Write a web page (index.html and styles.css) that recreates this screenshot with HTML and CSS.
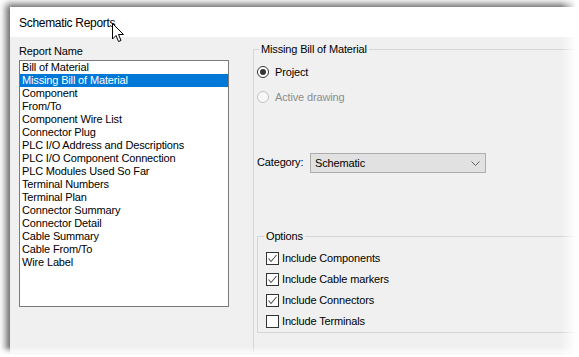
FILE: index.html
```html
<!DOCTYPE html>
<html lang="en">
<head>
    <meta charset="UTF-8">
    <title>Schematic Reports</title>
    <link rel="stylesheet" href="styles.css">
</head>
<body>
    <div class="screen">
        <div class="dialog">
            <!-- title bar -->
            <div class="title-bar">Schematic Reports</div>

            <div class="dialog-body">
                <!-- left: report list -->
                <div class="report-column">
                    <div class="list-label">Report Name</div>
                    <ul class="report-list">
                        <li>Bill of Material</li>
                        <li class="selected">Missing Bill of Material</li>
                        <li>Component</li>
                        <li>From/To</li>
                        <li>Component Wire List</li>
                        <li>Connector Plug</li>
                        <li>PLC I/O Address and Descriptions</li>
                        <li>PLC I/O Component Connection</li>
                        <li>PLC Modules Used So Far</li>
                        <li>Terminal Numbers</li>
                        <li>Terminal Plan</li>
                        <li>Connector Summary</li>
                        <li>Connector Detail</li>
                        <li>Cable Summary</li>
                        <li>Cable From/To</li>
                        <li>Wire Label</li>
                    </ul>
                </div>

                <!-- right: report settings -->
                <fieldset class="group report-group">
                    <legend>Missing Bill of Material</legend>

                    <div class="radio-row">
                        <span class="radio checked"></span>
                        <span>Project</span>
                    </div>
                    <div class="radio-row disabled">
                        <span class="radio"></span>
                        <span>Active drawing</span>
                    </div>

                    <div class="category-row">
                        <span class="category-label">Category:</span>
                        <div class="combo">
                            <span>Schematic</span>
                            <svg class="chevron" width="9" height="5" viewBox="0 0 9 5">
                                <path d="M0.5 0.5 L4.5 4.5 L8.5 0.5" fill="none" stroke="#606060" stroke-width="1"/>
                            </svg>
                        </div>
                    </div>

                    <fieldset class="group options-group">
                        <legend>Options</legend>
                        <div class="check-row">
                            <span class="checkbox"><svg width="11" height="11" viewBox="0 0 11 11"><path d="M1.5 5.5 L4 8.5 L9.5 2" fill="none" stroke="#505050" stroke-width="1.1"/></svg></span>
                            <span>Include Components</span>
                        </div>
                        <div class="check-row">
                            <span class="checkbox"><svg width="11" height="11" viewBox="0 0 11 11"><path d="M1.5 5.5 L4 8.5 L9.5 2" fill="none" stroke="#505050" stroke-width="1.1"/></svg></span>
                            <span>Include Cable markers</span>
                        </div>
                        <div class="check-row">
                            <span class="checkbox"><svg width="11" height="11" viewBox="0 0 11 11"><path d="M1.5 5.5 L4 8.5 L9.5 2" fill="none" stroke="#505050" stroke-width="1.1"/></svg></span>
                            <span>Include Connectors</span>
                        </div>
                        <div class="check-row">
                            <span class="checkbox"></span>
                            <span>Include Terminals</span>
                        </div>
                    </fieldset>
                </fieldset>
            </div>
        </div>

        <!-- mouse pointer over the title -->
        <svg class="cursor" width="13" height="20" viewBox="0 0 13 20">
            <path d="M0.5 0.5 L0.5 16 L4 12.5 L6.5 18.5 L9 17.5 L6.5 11.5 L11.5 11.5 Z" fill="#fff" stroke="#000" stroke-width="1"/>
        </svg>

        <!-- screenshot edge fades -->
        <div class="fade-right"></div>
        <div class="fade-bottom"></div>
    </div>
</body>
</html>
```

FILE: styles.css
```css
* {
    box-sizing: border-box;
}

body {
    margin: 0;
    background: #ffffff;
    font-family: "Liberation Sans", Arial, sans-serif;
    font-size: 11px;
    letter-spacing: -0.15px;
    color: #000000;
}

.screen {
    position: relative;
    width: 579px;
    height: 357px;
    overflow: hidden;
    padding: 7px 0 0 10px;
}

/* dialog window */
.dialog {
    width: 600px;
    height: 346px;
    background: #f0f0f0;
    box-shadow: -3px -2px 7px 1px rgba(0, 0, 0, 0.6);
}

.title-bar {
    height: 30px;
    background: #ffffff;
    padding: 9px 0 0 9px;
    font-size: 12px;
    line-height: 14px;
    letter-spacing: -0.3px;
    color: #000000;
}

.dialog-body {
    display: flex;
    align-items: flex-start;
    padding: 8px 0 0 9px;
}

/* report list */
.report-column {
    width: 210px;
    flex: 0 0 auto;
}

.list-label {
    height: 15px;
    line-height: 13px;
}

.report-list {
    list-style: none;
    margin: 0;
    padding: 0;
    height: 247px;
    background: #ffffff;
    border: 1px solid #7a7a7a;
}

.report-list li {
    height: 13px;
    line-height: 13px;
    padding-left: 2px;
    white-space: nowrap;
}

.report-list li.selected {
    background: #0078d7;
    color: #ffffff;
}

/* group boxes */
.group {
    margin: 0;
    border: 1px solid #d5d5d5;
    min-width: 0;
}

.group legend {
    padding: 0 2px;
    line-height: 13px;
}

.report-group {
    margin-left: 24px;
    width: 400px;
    height: 320px;
    margin-top: -2px;
    padding: 8px 0 0 3px;
}

.report-group > legend {
    margin-left: 2px;
}

.radio-row {
    display: flex;
    align-items: center;
    gap: 6px;
    height: 16px;
}

.radio-row + .radio-row {
    margin-top: 9px;
}

.radio-row.disabled {
    color: #8d8d8d;
}

.radio {
    width: 12px;
    height: 12px;
    border-radius: 50%;
    border: 1px solid #333333;
    background: #ffffff;
    display: flex;
    align-items: center;
    justify-content: center;
}

.radio.checked::after {
    content: "";
    width: 6px;
    height: 6px;
    border-radius: 50%;
    background: #333333;
}

.radio-row.disabled .radio {
    border-color: #c2c2c2;
    background: #f7f7f7;
}

/* category */
.category-row {
    display: flex;
    align-items: center;
    margin-top: 48px;
}

.category-label {
    width: 53px;
    margin-top: -2px;
}

.combo {
    width: 176px;
    height: 20px;
    background: #e1e1e1;
    border: 1px solid #adadad;
    display: flex;
    align-items: center;
    justify-content: space-between;
    padding: 0 5px 0 4px;
}

.chevron {
    display: block;
}

/* options */
.options-group {
    margin-top: 57px;
    width: 330px;
    padding: 7px 0 3px 8px;
}

.options-group > legend {
    margin-left: -2px;
}

.check-row {
    display: flex;
    align-items: center;
    gap: 3px;
    height: 16px;
}

.check-row + .check-row {
    margin-top: 5px;
}

.checkbox {
    width: 13px;
    height: 13px;
    border: 1px solid #333333;
    background: #ffffff;
    display: flex;
    align-items: center;
    justify-content: center;
}

.checkbox svg {
    display: block;
}

/* overlays */
.cursor {
    position: absolute;
    left: 112px;
    top: 23px;
}

.fade-right {
    position: absolute;
    top: 0;
    right: 0;
    width: 18px;
    height: 100%;
    background: linear-gradient(to right, rgba(255, 255, 255, 0), #ffffff 85%);
}

.fade-bottom {
    position: absolute;
    left: 0;
    bottom: 0;
    width: 100%;
    height: 10px;
    background: linear-gradient(to bottom, rgba(255, 255, 255, 0), #ffffff 80%);
}
```
